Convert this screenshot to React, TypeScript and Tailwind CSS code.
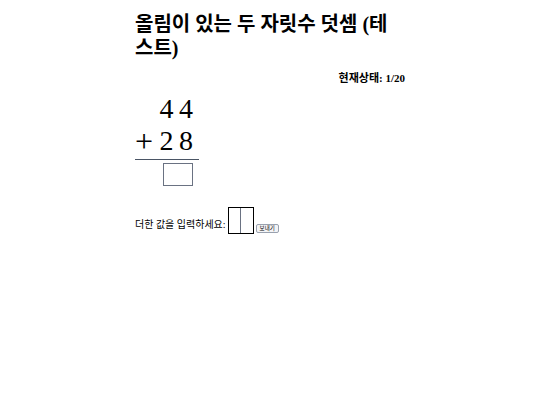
import React from 'react';

const font = { fontFamily: '"Liberation Serif", "Noto Sans CJK KR", serif' };

export default function App() {
    return (
        <div className="min-h-[405px] bg-white text-black" style={font}>
            <div className="mx-auto w-[270px] pt-[12px]">
                <h1 className="text-[20px] font-bold leading-[24px]">
                    올림이 있는 두 자릿수 덧셈 (테스트)
                </h1>
                <p className="mt-[10px] text-right text-[11px] font-bold">
                    현재상태: 1/20
                </p>
                <div className="mt-[6px] w-[64px] text-[28px] leading-[32px]">
                    <div className="flex">
                        <span className="w-[22px]" />
                        <span className="w-[19px] text-center">4</span>
                        <span className="w-[20px] text-center">4</span>
                    </div>
                    <div className="flex">
                        <span className="w-[22px] text-left text-[32px]">+</span>
                        <span className="w-[19px] text-center">2</span>
                        <span className="w-[20px] text-center">8</span>
                    </div>
                </div>
                <div className="mt-[2px] h-px w-[64px] bg-gray-600" />
                <div className="ml-[28px] mt-[3px] h-[23px] w-[30px] border border-gray-500" />
                <div className="mt-[21px] flex items-end">
                    <span className="mb-[2px] text-[10px]">더한 값을 입력하세요:</span>
                    <div className="ml-[2px] flex h-[27px] w-[26px] border border-black">
                        <div className="w-1/2 border-r border-gray-500" />
                    </div>
                    <button className="mb-[1px] ml-[2px] rounded-[2px] border border-gray-400 bg-gray-100 px-[3px] text-[5.5px] leading-[7px]">
                        보내기
                    </button>
                </div>
            </div>
        </div>
    );
}
